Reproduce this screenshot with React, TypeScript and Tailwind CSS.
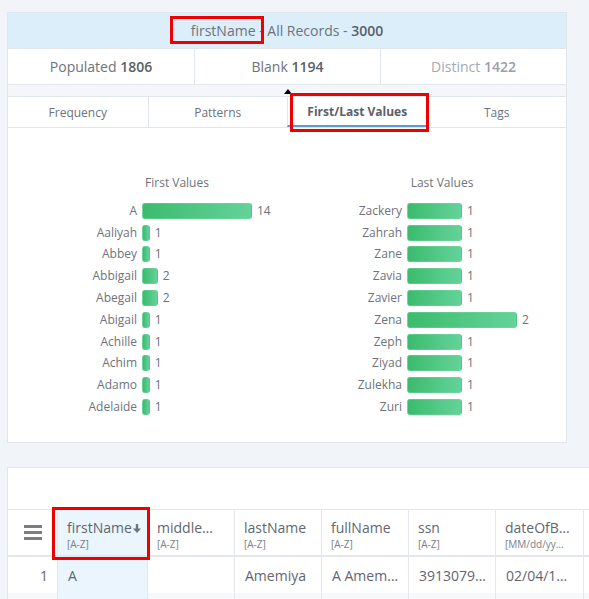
import React from "react";

type Item = { label: string; value: number };

const firstValues: Item[] = [
  { label: "A", value: 14 },
  { label: "Aaliyah", value: 1 },
  { label: "Abbey", value: 1 },
  { label: "Abbigail", value: 2 },
  { label: "Abegail", value: 2 },
  { label: "Abigail", value: 1 },
  { label: "Achille", value: 1 },
  { label: "Achim", value: 1 },
  { label: "Adamo", value: 1 },
  { label: "Adelaide", value: 1 },
];

const lastValues: Item[] = [
  { label: "Zackery", value: 1 },
  { label: "Zahrah", value: 1 },
  { label: "Zane", value: 1 },
  { label: "Zavia", value: 1 },
  { label: "Zavier", value: 1 },
  { label: "Zena", value: 2 },
  { label: "Zeph", value: 1 },
  { label: "Ziyad", value: 1 },
  { label: "Zulekha", value: 1 },
  { label: "Zuri", value: 1 },
];

function BarChart({ title, items }: { title: string; items: Item[] }) {
  const max = Math.max(...items.map((i) => i.value));
  return (
    <div className="w-[200px] flex flex-col">
      <div className="text-center text-[12px] leading-[16px] text-[#6c737d]">{title}</div>
      <div className="mt-[9px] flex flex-col">
        {items.map((it) => (
          <div key={it.label} className="h-[21.8px] flex items-center">
            <div className="w-[60px] text-right text-[12px] leading-[16px] text-[#6c737d] whitespace-nowrap">
              {it.label}
            </div>
            <div
              className="ml-[5px] h-[16px] rounded-[3px] bg-linear-to-r from-[#3bbb6d] to-[#63d399] border border-[#7fd9a8]/40"
              style={{ width: `${(110 * it.value) / max}px` }}
            />
            <div className="ml-[5px] text-[12px] leading-[16px] text-[#6c737d]">{it.value}</div>
          </div>
        ))}
      </div>
    </div>
  );
}

const tabs = ["Frequency", "Patterns", "First/Last Values", "Tags"];

type Col = { name: string; type: string; w: string; value: string; sorted?: boolean };

const cols: Col[] = [
  { name: "firstName", type: "[A-Z]", w: "w-[90px]", value: "A", sorted: true },
  { name: "middle…", type: "[A-Z]", w: "w-[87px]", value: "" },
  { name: "lastName", type: "[A-Z]", w: "w-[87px]", value: "Amemiya" },
  { name: "fullName", type: "[A-Z]", w: "w-[87px]", value: "A Amem…" },
  { name: "ssn", type: "[A-Z]", w: "w-[87px]", value: "3913079…" },
  { name: "dateOfB…", type: "[MM/dd/yy…", w: "w-[88px]", value: "02/04/1…" },
  { name: "", type: "", w: "w-[87px]", value: "" },
];

function SortArrow() {
  return (
    <svg width="8" height="9" viewBox="0 0 8 9" className="ml-[1px] mt-[1px] shrink-0">
      <rect x="2.8" y="0" width="2.4" height="5" fill="#6f757d" />
      <path d="M0 4.5 L8 4.5 L4 9 Z" fill="#6f757d" />
    </svg>
  );
}

export default function App() {
  return (
    <div
      className="w-full min-h-[599px] overflow-hidden bg-[#f1f4f8] pt-[12px] pl-[7px]"
      style={{ fontFamily: '"Open Sans", "Liberation Sans", sans-serif' }}
    >
      {/* Profile card */}
      <div className="relative w-[560px] border border-[#e1e6ec] bg-white">
        <div className="h-[35px] bg-[#ddeefb] flex items-center justify-center text-[14px] text-[#6c737d]">
          <span>
            firstName - All Records - <span className="font-semibold text-[#5a6069]">3000</span>
          </span>
        </div>
        <div className="grid grid-cols-3 h-[36px] border-t border-[#e1e6ec] text-[14px] text-[#6c737d]">
          <div className="flex items-center justify-center">
            Populated&nbsp;<span className="font-semibold text-[#5a6069]">1806</span>
          </div>
          <div className="flex items-center justify-center border-l border-[#e1e6ec]">
            Blank&nbsp;<span className="font-semibold text-[#5a6069]">1194</span>
          </div>
          <div className="flex items-center justify-center border-l border-[#e1e6ec] text-[#a3a9b1]">
            Distinct&nbsp;<span className="font-semibold text-[#9aa0a8]">1422</span>
          </div>
        </div>
        <div className="h-[13px] bg-[#f4f6f9] border-t border-b border-[#e1e6ec]" />
        <div className="grid grid-cols-4 h-[31px] border-b border-[#e1e6ec] text-[12px]">
          {tabs.map((t, i) => (
            <div
              key={t}
              className={
                i === 2
                  ? "flex items-center justify-center border-l border-[#e1e6ec] border-b-2 border-b-[#5b9bd5] pt-[1px] font-bold text-[#5a6069]"
                  : i === 0
                  ? "flex items-center justify-center pt-[1px] text-[#6c737d]"
                  : "flex items-center justify-center border-l border-[#e1e6ec] pt-[1px] text-[#6c737d]"
              }
            >
              {t}
            </div>
          ))}
        </div>
        <div className="h-[314px] flex pl-[69px] gap-[65px] pt-[47px]">
          <BarChart title="First Values" items={firstValues} />
          <BarChart title="Last Values" items={lastValues} />
        </div>

        {/* overlays */}
        <div className="absolute left-[276px] top-[76px] w-0 h-0 border-l-[4.5px] border-r-[4.5px] border-b-[5px] border-l-transparent border-r-transparent border-b-black" />
        <div className="absolute left-[162px] top-[3px] w-[94px] h-[28px] border-[3px] border-[#ee0000]" />
        <div className="absolute left-[282px] top-[80px] w-[139px] h-[39px] border-[3px] border-[#ee0000]" />
      </div>

      {/* Grid card */}
      <div className="relative mt-[24px] w-[700px] border-t border-l border-[#e1e6ec] bg-white">
        <div className="h-[41px]" />
        <div className="flex h-[48px] border-t border-b-2 border-[#e4e8ed]">
          <div className="w-[49px] flex items-center justify-center">
            <div className="flex flex-col gap-[3px] ml-[1px]">
              <div className="w-[18px] h-[3px] bg-[#7b7f85]" />
              <div className="w-[18px] h-[3px] bg-[#7b7f85]" />
              <div className="w-[18px] h-[3px] bg-[#7b7f85]" />
            </div>
          </div>
          {cols.map((c, i) => (
            <div
              key={i}
              className={`${c.w} shrink-0 border-l border-[#e4e8ed] pl-[9px] pt-[9px] whitespace-nowrap ${
                c.sorted ? "bg-[#eaf5fd]" : ""
              }`}
            >
              <div className="flex items-center text-[14px] leading-[18px] text-[#5f666f]">
                <span>{c.name}</span>
                {c.sorted && <SortArrow />}
              </div>
              <div className="text-[10px] leading-[14px] text-[#7a8089]">{c.type}</div>
            </div>
          ))}
        </div>
        <div className="flex h-[36px] text-[14px] text-[#5f666f]">
          <div className="w-[49px] flex items-center justify-end pr-[9px]">1</div>
          {cols.map((c, i) => (
            <div
              key={i}
              className={`${c.w} shrink-0 border-l border-[#e4e8ed] pl-[10px] flex items-center whitespace-nowrap ${
                c.sorted ? "bg-[#eaf5fd]" : ""
              }`}
            >
              <span>{c.value}</span>
            </div>
          ))}
        </div>
        <div className="flex h-[36px] bg-[#f6f8fa]">
          <div className="w-[49px]" />
          {cols.map((c, i) => (
            <div
              key={i}
              className={`${c.w} shrink-0 border-l border-[#e4e8ed] ${c.sorted ? "bg-[#eaf5fd]" : ""}`}
            />
          ))}
        </div>
        <div className="absolute left-[44px] top-[39px] w-[98px] h-[53px] border-[3px] border-[#ee0000]" />
      </div>
    </div>
  );
}
